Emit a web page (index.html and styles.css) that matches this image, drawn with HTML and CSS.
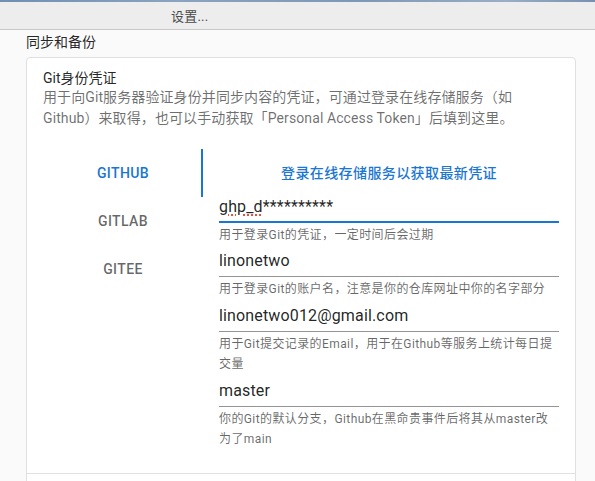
FILE: index.html
```html
<!DOCTYPE html>
<html lang="zh-CN">
<head>
<meta charset="utf-8">
<title>设置...</title>
<link rel="stylesheet" href="styles.css">
</head>
<body>
<div class="strip"></div>
<header class="titlebar"><span class="title">设置...</span></header>
<main class="content">
  <h2 class="section-title">同步和备份</h2>
  <section class="card">
    <div class="item">
      <div class="item-title">Git身份凭证</div>
      <div class="item-desc">用于向Git服务器验证身份并同步内容的凭证，可通过登录在线存储服务（如Github）来取得，也可以手动获取「Personal Access Token」后填到这里。</div>
    </div>
    <div class="auth-row">
      <nav class="tabs">
        <div class="tab selected">GitHub</div>
        <div class="tab">GitLab</div>
        <div class="tab">Gitee</div>
      </nav>
      <div class="panel">
        <button class="login-btn">登录在线存储服务以获取最新凭证</button>
        <div class="field">
          <div class="input focused"><span class="misspelled">ghp_d</span>**********</div>
          <div class="helper">用于登录Git的凭证，一定时间后会过期</div>
        </div>
        <div class="field">
          <div class="input">linonetwo</div>
          <div class="helper">用于登录Git的账户名，注意是你的仓库网址中你的名字部分</div>
        </div>
        <div class="field">
          <div class="input">linonetwo012@gmail.com</div>
          <div class="helper">用于Git提交记录的Email，用于在Github等服务上统计每日提交量</div>
        </div>
        <div class="field">
          <div class="input">master</div>
          <div class="helper">你的Git的默认分支，Github在黑命贵事件后将其从master改为了main</div>
        </div>
      </div>
    </div>
    <div class="divider"></div>
    <div class="item next"></div>
  </section>
</main>
</body>
</html>
```
FILE: styles.css
```css
html, body {
  margin: 0;
  padding: 0;
  height: 100%;
  overflow: hidden;
}
body {
  background: #fafafa;
  font-family: Roboto, "Noto Sans CJK SC", "Noto Sans", sans-serif;
  color: rgba(0, 0, 0, 0.87);
}
.strip {
  height: 2px;
  background: linear-gradient(90deg, #6f8fb3, #8aa3c0 30%, #7d97b6 60%, #9aaec6 85%, #7890b0);
}
.titlebar {
  height: 28px;
  background: #ededed;
  border-bottom: 1px solid #c9c9c9;
  display: flex;
  align-items: center;
  padding-left: 171px;
  box-sizing: border-box;
}
.title {
  font-size: 13px;
  color: #4a4a4a;
  letter-spacing: 0.2px;
}
.content {
  padding: 0 19px 0 26px;
}
.section-title {
  margin: 0;
  padding-top: 2px;
  font-size: 14px;
  font-weight: 400;
  line-height: 20px;
  height: 25px;
  color: rgba(0, 0, 0, 0.87);
}
.card {
  background: #fff;
  border: 1px solid #e0e0e0;
  border-radius: 4px;
  min-height: 600px;
}
.item {
  padding: 11px 16px 0 16px;
}
.item-title {
  font-size: 14px;
  line-height: 18px;
  color: rgba(0, 0, 0, 0.87);
}
.item-desc {
  font-size: 14px;
  line-height: 21px;
  color: rgba(0, 0, 0, 0.58);
  letter-spacing: 0.1px;
}
.auth-row {
  display: flex;
  margin-top: 20px;
  padding: 0 16px 0 16px;
}
.tabs {
  width: 160px;
  flex: none;
  display: flex;
  flex-direction: column;
}
.tab {
  height: 48px;
  display: flex;
  align-items: center;
  justify-content: center;
  font-size: 14px;
  font-weight: 500;
  text-transform: uppercase;
  letter-spacing: 0.4px;
  color: rgba(0, 0, 0, 0.6);
}
.tab.selected {
  color: #1976d2;
  box-shadow: inset -2px 0 0 #1976d2;
}
.panel {
  flex: 1;
  padding: 5px 0 23px 16px;
  display: flex;
  flex-direction: column;
}
.login-btn {
  height: 36.5px;
  border: none;
  background: transparent;
  color: #1976d2;
  font-family: Roboto, "Noto Sans CJK SC", sans-serif;
  font-size: 14px;
  font-weight: 500;
  letter-spacing: 0.4px;
  padding: 6px 8px;
  text-align: center;
}
.field {
  display: flex;
  flex-direction: column;
}
.input {
  height: 32px;
  box-sizing: border-box;
  padding: 4px 0 5px;
  font-size: 16px;
  line-height: 23px;
  letter-spacing: 0.15px;
  color: rgba(0, 0, 0, 0.87);
  border-bottom: 1px solid rgba(0, 0, 0, 0.42);
}
.input.focused {
  border-bottom: 2px solid #1976d2;
  padding-bottom: 4px;
}
.misspelled {
  text-decoration: underline dotted #e8513e;
  text-decoration-thickness: 2px;
  text-underline-offset: 3px;
}
.helper {
  margin-top: 3px;
  font-size: 12px;
  line-height: 19.92px;
  color: rgba(0, 0, 0, 0.6);
  letter-spacing: 0.4px;
}
.divider {
  height: 1px;
  background: #e0e0e0;
}
.item.next {
  height: 80px;
}
```
